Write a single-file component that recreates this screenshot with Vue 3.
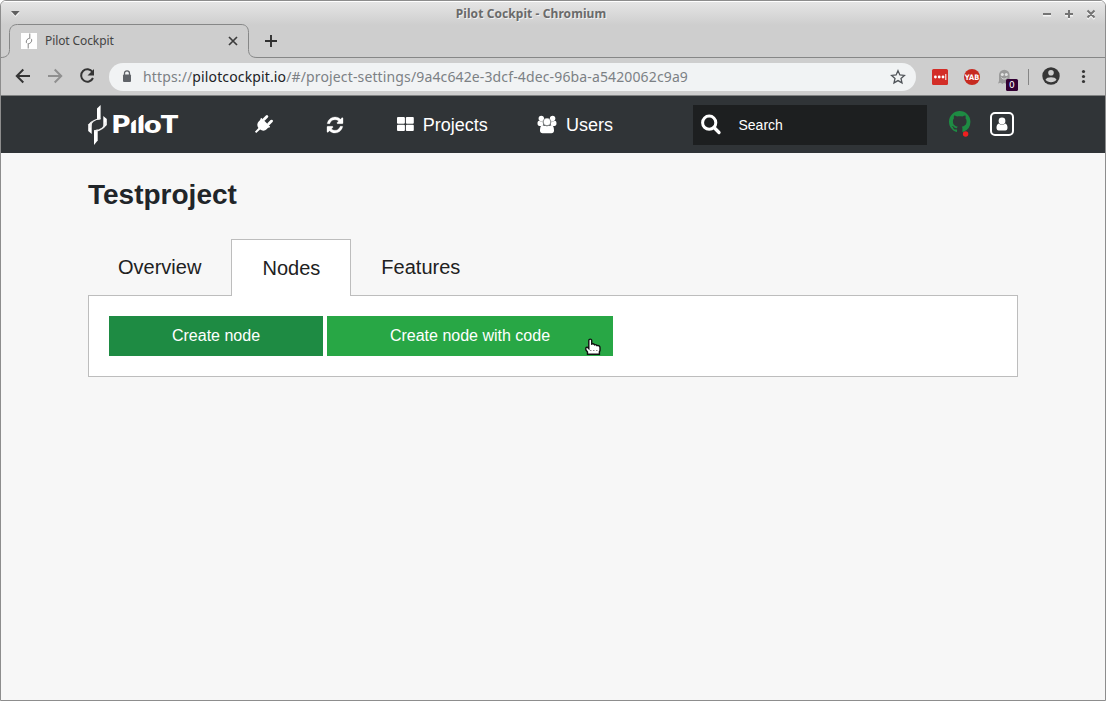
<script setup>
const tabs = [
  { label: 'Overview', active: false },
  { label: 'Nodes', active: true },
  { label: 'Features', active: false }
]
</script>

<template>
  <div class="window">
    <div class="frame-top">
      <div class="titlebar">
        <svg class="caret" width="9" height="6" viewBox="0 0 9 6"><path d="M0 1.500h9L4.500 6z" fill="#fff" opacity=".7" /><path d="M0 0h8.600L4.300 4.700z" fill="#606060" /></svg>
        <span class="title">Pilot Cockpit - Chromium</span>
        <svg class="controls" width="52" height="12" viewBox="0 0 52 12" fill="none" stroke-width="2">
          <path d="M0 7.500h8M22 7.500h8M26 3.500v8M44.500 4l7 7M51.500 4l-7 7" stroke="#f4f4f4" />
          <path d="M0 6h8M22 6h8M26 2v8M44.500 2.500l7 7M51.500 2.500l-7 7" stroke="#747474" />
        </svg>
      </div>
      <div class="tabstrip">
        <svg class="tab-shape" width="1104" height="35" viewBox="0 0 1104 35" fill="none" stroke="#868787">
          <path d="M0 33.500C5 33.500 8.500 31 8.500 25.500V8.500C8.500 3.500 11.500.5 16.500.5H240C245 .5 247.500 3.500 247.500 8.500V25.500C247.500 31 250.500 33.500 256 33.500H1104" />
        </svg>
        <svg class="favicon" width="16" height="16" viewBox="0 0 16 16"><path d="M0 0h16v16H0z" fill="#fff" /><path d="M8.800.5v4.700C6.500 5.500 5 7.200 5.300 9.300l.8 1M7.200 15.500v-4.700c2.300-.3 3.800-2 3.500-4.100l-.8-1" fill="none" stroke="#777" stroke-width=".9" /></svg>
        <span class="tab-title">Pilot Cockpit</span>
        <svg class="tab-close" width="10" height="10" viewBox="0 0 10 10"><path d="M1 1l8 8M9 1L1 9" stroke="#3c3c3c" stroke-width="1.700" /></svg>
        <svg class="tab-new" width="12" height="12" viewBox="0 0 12 12"><path d="M0 6h12M6 0v12" stroke="#303030" stroke-width="1.900" /></svg>
      </div>
      <div class="toolbar">
        <div class="nav-buttons">
          <svg class="raised" width="16" height="16" viewBox="0 0 16 16" fill="none" stroke="#353535" stroke-width="2"><path d="M15 8H2.500M8.300 1.500L1.800 8l6.500 6.500" /></svg>
          <svg class="raised" width="16" height="16" viewBox="0 0 16 16" fill="none" stroke="#8f8f8f" stroke-width="2"><path d="M1 8h12.500M7.700 1.500L14.200 8l-6.500 6.500" /></svg>
          <svg class="raised" width="16" height="16" viewBox="0 0 16 16"><path d="M13.500 4A6.200 6.200 0 1 0 14 10" fill="none" stroke="#353535" stroke-width="2" /><path d="M15 1v6.500H8.500z" fill="#353535" /></svg>
        </div>
        <div class="omnibox">
          <svg class="lock" width="10" height="13" viewBox="0 0 10 13"><path d="M2.500 5V3.300a2.500 2.500 0 0 1 5 0V5" fill="none" stroke="#5f6368" stroke-width="1.300" /><rect x="1" y="4.500" width="8" height="7.500" rx="1" fill="#5f6368" /></svg>
          <span class="url">https://<b>pilotcockpit.io</b>/#/project-settings/9a4c642e-3dcf-4dec-96ba-a5420062c9a9</span>
          <svg class="star" width="16" height="16" viewBox="0 0 16 16"><path d="M8 1.700l1.900 4.200 4.500.5-3.400 3 1 4.500L8 11.600l-4 2.300 1-4.500-3.400-3 4.500-.5z" fill="none" stroke="#505459" stroke-width="1.300" /></svg>
        </div>
        <svg class="extensions" width="172" height="28" viewBox="0 0 172 28">
          <rect x="0" y="6" width="16" height="16" rx="1.500" fill="#d32d27" />
          <g fill="#fff"><circle cx="3.400" cy="14" r="1.400" /><circle cx="7.200" cy="14" r="1.400" /><circle cx="11" cy="14" r="1.400" /><path d="M13.300 11h1v6h-1z" /></g>
          <circle cx="40" cy="14" r="8" fill="#c72a20" />
          <text class="yab" x="32.800" y="16.700" textLength="14.400" lengthAdjust="spacingAndGlyphs">YAB</text>
          <path d="M67 12a5.300 5.300 0 0 1 10.600 0v6l1 2.500-2.600-.8-1.800 1.300-1.900-1.300-1.900 1.300-1.800-1.300-2.600.8 1-2.500z" fill="#9b9b9b" />
          <g fill="#e2e2e2"><circle cx="70.300" cy="11.500" r="1.500" /><circle cx="74.300" cy="11.500" r="1.500" /></g>
          <path d="M69.500 14.500c1 2 4.500 2 5.500 0" fill="none" stroke="#e2e2e2" />
          <rect x="74" y="16" width="12" height="12" rx="1.500" fill="#330033" />
          <text class="badge" x="77" y="25">0</text>
          <path d="M96.500 6v16" stroke="#858585" />
          <circle cx="119" cy="13" r="8.700" fill="#363636" />
          <circle cx="119" cy="9.800" r="2.800" fill="#cecece" /><path d="M113.500 16.800c1-3.300 10-3.300 11 0-2.200 3.100-8.800 3.100-11 0z" fill="#cecece" />
          <g fill="#353535"><circle cx="151.500" cy="8.500" r="1.600" /><circle cx="151.500" cy="13.500" r="1.600" /><circle cx="151.500" cy="18.500" r="1.600" /></g>
        </svg>
      </div>
    </div>

    <header class="app-bar">
      <svg class="logo" width="92" height="42" viewBox="0 0 92 42">
        <defs>
          <clipPath id="cut-i"><path d="M42 20l7-6v18h-7z" /></clipPath>
          <clipPath id="cut-l"><path d="M49 15l8-7v24h-8z" /></clipPath>
        </defs>
        <path d="M9 4.500L12.600 1v14l-3.600.8z" fill="#fff" />
        <path d="M6 26.300l3.700-.8v11L6 41z" fill="#fff" />
        <path d="M.2 20.500L3.700 17v13L.2 27z" fill="#fff" />
        <path d="M15.300 12l3.500 3v6l-3.500 3.500z" fill="#fff" />
        <path d="M12.500 14.800C6.500 14.800 2 18.500 2 24M6.500 27C12.500 27 17.500 23 17.500 18" fill="none" stroke="#eee" stroke-width="1.300" />
        <g class="wordmark">
          <text x="23.500" y="29" textLength="18.500" lengthAdjust="spacingAndGlyphs">P</text>
          <text x="41.500" y="29" textLength="8" lengthAdjust="spacingAndGlyphs" clip-path="url(#cut-i)">i</text>
          <text x="49" y="29" textLength="8" lengthAdjust="spacingAndGlyphs" clip-path="url(#cut-l)">l</text>
          <text x="56" y="29" textLength="17.500" lengthAdjust="spacingAndGlyphs">o</text>
          <text x="72.500" y="29" textLength="18" lengthAdjust="spacingAndGlyphs">T</text>
        </g>
      </svg>
      <svg class="plug" width="18" height="18" viewBox="0 0 18 18"><g transform="rotate(45 9 9)" fill="#fff"><rect x="4.300" y="-1.200" width="2.800" height="7" rx="1.400" /><rect x="10.900" y="-1.200" width="2.800" height="7" rx="1.400" /><path d="M3 5h12q.6 1 0 2h-.4v2.200c0 2.800-1.700 4.600-4.400 5.100L9.900 19.500H8.100l-.3-5.200C5.100 13.800 3.400 12 3.400 9.200V7H3q-.6-1 0-2z" /></g></svg>
      <svg class="refresh" width="16" height="16" viewBox="0 0 1536 1536"><path fill="#fff" stroke="#fff" stroke-width="30" d="M1511 928q0 5-1 7-64 268-268 434.500T764 1536q-146 0-282.500-55T238 1324l-129 129q-19 19-45 19t-45-19-19-45V960q0-26 19-45t45-19h448q26 0 45 19t19 45-19 45l-137 137q71 66 161 102t187 36q134 0 250-65t186-179q11-17 53-117 8-23 30-23h192q13 0 22.500 9.500t9.500 22.500zm25-800v448q0 26-19 45t-45 19h-448q-26 0-45-19t-19-45 19-45l138-138Q969 256 768 256q-134 0-250 65T332 500q-11 17-53 117-8 23-30 23H50q-13 0-22.500-9.500T18 608v-7q65-268 270-434.500T768 0q146 0 284 55.500T1297 212l130-129q19-19 45-19t45 19 19 45z" /></svg>
      <svg class="grid-icon" width="17" height="15" viewBox="0 0 17 15" fill="#fff"><rect width="7.900" height="6.700" rx="1" /><rect x="8.900" width="7.900" height="6.700" rx="1" /><rect y="7.700" width="7.900" height="6.300" rx="1" /><rect x="8.900" y="7.700" width="7.900" height="6.300" rx="1" /></svg>
      <span class="nav-label projects">Projects</span>
      <svg class="users" width="20" height="19" viewBox="0 0 20 19" fill="#fff">
        <circle cx="4.300" cy="3.400" r="2.700" /><circle cx="15.600" cy="3.400" r="2.700" />
        <path d="M.5 8.500c0-2 .6-2.800 1.500-2.800 1.300.8 2.800.8 4 .3-.4 2 0 2.600.5 3.500L4.500 11h-2C1.200 11 .5 10 .5 8.500zM19.500 8.500c0-2-.6-2.800-1.500-2.800-1.300.8-2.800.8-4 .3.400 2 0 2.600-.5 3.500l2 1.500h2c1.300 0 2-1 2-2.500z" />
        <circle cx="10" cy="6.900" r="3.800" stroke="#303437" stroke-width=".4" />
        <path d="M5.200 10c2.500 1.500 7 1.500 9.600 0 1.700.6 2.200 3 2.200 5.500 0 1.700-1 2.700-2.500 2.700h-9C4 18.200 3 17.200 3 15.500c0-2.500.5-4.900 2.200-5.500z" />
      </svg>
      <span class="nav-label users-label">Users</span>
      <div class="search">
        <svg width="20" height="20" viewBox="0 0 20 20" fill="none" stroke="#fff"><circle cx="8.200" cy="7.700" r="6.600" stroke-width="3" /><path d="M13 12.500l5 5" stroke-width="3.300" stroke-linecap="round" /></svg>
        <span>Search</span>
      </div>
      <svg class="octocat" width="24" height="27" viewBox="0 0 24 27">
        <path transform="scale(1.340)" fill="#1e8b43" d="M8 0C3.580 0 0 3.580 0 8c0 3.540 2.290 6.530 5.470 7.590.4.070.55-.17.55-.38 0-.19-.01-.82-.01-1.490-2.010.37-2.530-.49-2.690-.94-.09-.23-.48-.94-.82-1.130-.28-.15-.68-.52-.01-.53.63-.01 1.080.58 1.230.82.720 1.210 1.870.87 2.330.66.070-.52.280-.87.510-1.070-1.780-.2-3.640-.89-3.640-3.950 0-.87.310-1.590.82-2.150-.08-.2-.36-1.020.08-2.120 0 0 .67-.21 2.200.82.640-.18 1.320-.27 2-.27s1.360.09 2 .27c1.530-1.040 2.200-.82 2.200-.82.440 1.100.16 1.920.08 2.120.51.560.82 1.270.82 2.150 0 3.070-1.870 3.750-3.650 3.950.29.250.54.730.54 1.480 0 1.070-.01 1.930-.01 2.200 0 .21.150.46.550.38A8.010 8.010 0 0 0 16 8c0-4.420-3.580-8-8-8z" />
        <circle cx="16.600" cy="23" r="2.700" fill="#ee2020" />
      </svg>
      <svg class="profile" width="24" height="24" viewBox="0 0 24 24"><rect x="1" y="1" width="22" height="22" rx="4" fill="none" stroke="#fff" stroke-width="2" /><circle cx="12" cy="9" r="3.400" fill="#fff" /><path d="M8.700 11.500c2 1.600 4.600 1.600 6.600 0 1.700.7 2.200 2.300 2.200 4.300 0 1.600-.7 2.700-2.200 2.700H8.700c-1.500 0-2.200-1.100-2.200-2.700 0-2 .5-3.600 2.200-4.300z" fill="#fff" /></svg>
    </header>

    <main class="content">
      <h1>Testproject</h1>
      <div class="tabs">
        <div v-for="tab in tabs" :key="tab.label" class="tab" :class="{ active: tab.active }">{{ tab.label }}</div>
      </div>
      <section class="panel">
        <button class="btn create">Create node</button>
        <button class="btn create-code">Create node with code
          <svg class="cursor" width="17" height="18" viewBox="0 0 17 18"><path d="M3.800 2.500C3.800.700 6.700.700 6.700 2.500V6c1.300-.5 2.300-.2 2.800.8 1.200-.4 2 .1 2.500.9 1.700-.5 3 .3 3 2v3l-.6 1v2.500H2.500V14L.8 11.800v-1.500c0-1.200 1.700-1.500 3 .2z" fill="#fff" stroke="#111" stroke-width="1.400" /><path d="M5 12.500h1.500M8 12.500h1.500M11 12.500h1.500" stroke="#888" /></svg>
        </button>
      </section>
    </main>
  </div>
</template>

<style>
html, body { margin: 0; background: #fff; overflow: hidden; }
</style>

<style scoped>
* { box-sizing: border-box; }
svg { display: block; flex: none; overflow: visible; }
.window { width: 1106px; height: 701px; border: 1px solid #8d8d8d; border-radius: 6px 6px 0 0; background: #f7f7f7; overflow: hidden; font-family: "Liberation Sans", Arial, sans-serif; }
.frame-top { height: 95px; background: linear-gradient(#e5e5e5, #cecece 23px); border-top: 1px solid #fff; border-bottom: 1px solid #808282; font-family: "Noto Sans", sans-serif; }
.titlebar { height: 22px; display: flex; align-items: center; padding: 2px 0 0 10px; }
.title { width: 170px; margin-left: 426px; text-align: center; font-size: 12px; font-weight: 700; line-height: 16px; letter-spacing: .08px; color: #6a6a6a; text-shadow: 1px 1px #f0f0f0; white-space: nowrap; }
.controls { margin-left: 427px; }
.tabstrip { height: 34px; position: relative; display: flex; align-items: center; padding-left: 20px; }
.tab-shape { position: absolute; left: 0; top: 0; }
.tab-title { width: 183px; margin-left: 8px; font-size: 12px; line-height: 16px; letter-spacing: -.1px; color: #444; }
.tab-new { margin-left: 27px; }
.toolbar { height: 37px; display: flex; align-items: center; padding-left: 14px; }
.nav-buttons { display: flex; gap: 16px; width: 94px; padding-bottom: 2px; }
.omnibox { width: 807px; height: 28px; display: flex; align-items: center; padding-left: 13px; background: #f1f3f4; border-radius: 14px; }
.url { width: 747px; margin-left: 11px; font-size: 14px; line-height: 20px; letter-spacing: .135px; color: #7c8185; white-space: nowrap; }
.url b { font-weight: 400; color: #202124; }
.extensions { margin-left: 16px; }
.yab { font: 900 7.500px "DejaVu Sans", sans-serif; fill: #fff; }
.badge { font: 9px "DejaVu Sans", sans-serif; fill: #fff; }
.app-bar { height: 57px; display: flex; align-items: center; padding-left: 87px; background: #303437; color: #fff; }
.wordmark { fill: #fff; font: 800 25px Lato, sans-serif; }
.plug { margin-left: 74px; }
.refresh { margin-left: 55px; }
.grid-icon { margin-left: 54px; }
.nav-label { font-size: 18px; line-height: 24px; white-space: nowrap; }
.projects { width: 66px; margin-left: 8.700px; }
.users { margin-left: 48.300px; }
.users-label { width: 47px; margin-left: 9px; }
.search { display: flex; align-items: center; width: 234px; height: 40px; margin-left: 80px; padding-left: 8px; background: #1d1f20; font-size: 14px; }
.search span { margin-left: 17.500px; }
.octocat { margin-left: 22px; }
.profile { margin-left: 17px; position: relative; top: -1px; }
.content { padding: 25px 87px 0; }
h1 { margin: 0; font-size: 28px; line-height: 34px; color: #212529; }
.tabs { display: flex; margin-top: 27px; height: 57px; position: relative; z-index: 1; }
.tab { height: 57px; padding: 0 30px; font-size: 20px; line-height: 56px; color: #212121; }
.tab.active { width: 120px; padding: 0; text-align: center; line-height: 57px; background: #fff; border: 1px solid #bdbdbd; border-bottom: 0; }
.panel { display: flex; gap: 4px; width: 930px; height: 82px; margin-top: -1px; padding: 20px; background: #fff; border: 1px solid #bdbdbd; }
.btn { position: relative; height: 40px; padding: 0; border: 0; color: #fff; font: 16px/38px "Liberation Sans", sans-serif; }
.create { width: 214px; background: #1e8b43; }
.create-code { width: 286px; background: #28a745; }
.cursor { position: absolute; right: 11px; top: 22px; }
</style>
